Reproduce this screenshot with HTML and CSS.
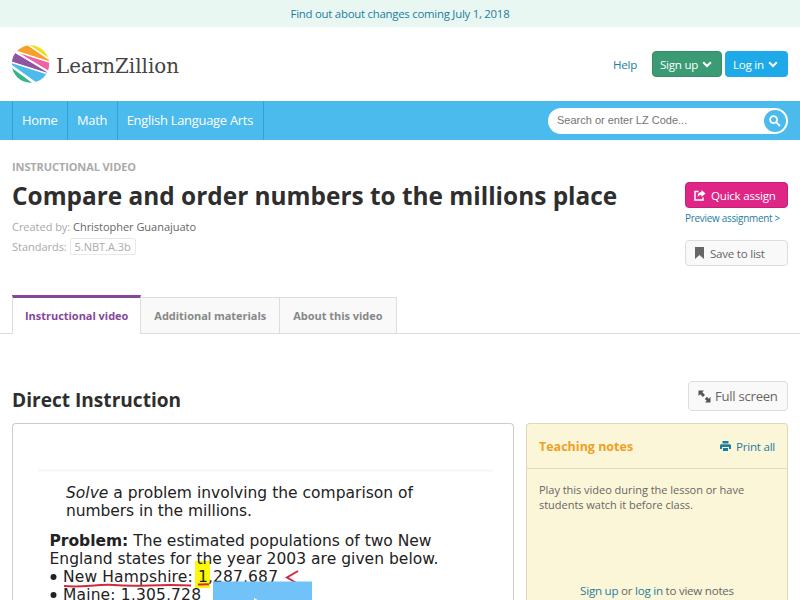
FILE: index.html
```
<!DOCTYPE html>
<html lang="en">

<head>
  <meta charset="utf-8">
  <meta name="viewport" content="width=device-width">
  <title>Compare and order numbers to the millions place | LearnZillion</title>

  <link rel="stylesheet" href="styles.css">
</head>

<body>
  <div class="banner">
    <a class="link" href="#">Find out about changes coming July 1, 2018</a>
  </div>

  <header class="header">
    <a class="logo" href="#">
      <svg width="170" height="40" viewBox="0 0 170 40">
        <clipPath id="ball"><circle cx="18.500" cy="19" r="18.700"/></clipPath>
        <g clip-path="url(#ball)">
          <path d="M16 0H38V15Z" fill="#f1dc22"/>
          <path d="M0 0H16L38 15V17L4 6Z" fill="#f6a02c"/>
          <path d="M4 6L38 17V27Z" fill="#ec64a4"/>
          <path d="M0 8L4 8L38 29L0 17Z" fill="#9254a2"/>
          <path d="M0 17L38 29L28 40L0 20Z" fill="#4cbbec"/>
          <path d="M0 22L23 40H0Z" fill="#35b58a"/>
          <path d="M15 -1L39 15.500M3 6L39 17.500M3 7L39 28M0 17.500L38 29.500M0 22L23 39" fill="none" stroke="#fff" stroke-width="1.500"/>
        </g>
        <text class="logo__text" x="44" y="28" textLength="123" lengthAdjust="spacingAndGlyphs">LearnZillion</text>
      </svg>
    </a>
    <div class="account">
      <a class="link account__help" href="#">Help</a>
      <button class="button button--green">Sign up
        <svg class="chevron" width="10" height="7" viewBox="0 0 10 7"><path d="M1.200 1.200L5 5L8.800 1.200"/></svg>
      </button>
      <button class="button button--blue">Log in
        <svg class="chevron" width="10" height="7" viewBox="0 0 10 7"><path d="M1.200 1.200L5 5L8.800 1.200"/></svg>
      </button>
    </div>
  </header>

  <nav class="nav">
    <div class="nav__links">
      <a class="nav__link" href="#">Home</a>
      <a class="nav__link" href="#">Math</a>
      <a class="nav__link" href="#">English Language Arts</a>
    </div>
    <form class="search">
      <input class="search__field" type="text" placeholder="Search or enter LZ Code...">
      <button class="search__button" type="button" aria-label="Search">
        <svg width="12" height="12" viewBox="0 0 12 12"><circle cx="4.600" cy="4.600" r="3.500"/><path d="M7.400 7.400L11 11"/></svg>
      </button>
    </form>
  </nav>

  <section class="intro">
    <div class="intro__main">
      <div class="intro__type">Instructional video</div>
      <h1 class="intro__title">Compare and order numbers to the millions place</h1>
      <div class="intro__meta">Created by: <span class="intro__author">Christopher Guanajuato</span></div>
      <div class="intro__meta">Standards: <span class="standard">5.NBT.A.3b</span></div>
    </div>
    <div class="actions">
      <button class="button button--pink">
        <svg class="button__icon" width="12" height="11" viewBox="0 0 12 11">
          <path d="M4.500 1.500H1V10H9V7.500" fill="none" stroke="#fff" stroke-width="1.500"/>
          <path d="M7.500 0L11.500 3.500L7.500 7V4.900C5.500 4.800 4.400 5.500 3.700 7C3.300 4 4.700 2.200 7.500 2.100Z" fill="#fff"/>
        </svg>
        Quick assign
      </button>
      <a class="link actions__preview" href="#">Preview assignment &gt;</a>
      <button class="button button--plain">
        <svg class="button__icon" width="9" height="12" viewBox="0 0 9 12"><path d="M0 0H9V12L4.500 8L0 12Z" fill="#666"/></svg>
        Save to list
      </button>
    </div>
  </section>

  <div class="tabs">
    <a class="tab tab--active" href="#">Instructional video</a>
    <a class="tab" href="#">Additional materials</a>
    <a class="tab" href="#">About this video</a>
  </div>

  <div class="section-head">
    <h2 class="section-head__title">Direct Instruction</h2>
    <button class="button button--plain button--large">
      <svg class="button__icon" width="13" height="13" viewBox="0 0 13 13" fill="#555">
        <path d="M0.500 0.500H6L4.300 2.200L7 4.900L4.900 7L2.200 4.300L0.500 6Z"/>
        <path d="M12.500 12.500H7L8.700 10.800L6.800 8.900L8.900 6.800L10.800 8.700L12.500 7Z"/>
      </svg>
      Full screen
    </button>
  </div>

  <main class="content">
    <div class="video">
      <svg class="slide" width="500" height="176" viewBox="0 0 500 176">
        <path d="M25 46.500H480" stroke="#f6f6f6" stroke-width="2"/>
        <rect x="182" y="137" width="15" height="27" fill="#fcf80c"/>
        <text x="53" y="74" textLength="347"><tspan font-style="italic">Solve</tspan> a problem involving the comparison of</text>
        <text x="53" y="92" textLength="186">numbers in the millions.</text>
        <text x="36.500" y="121.500" textLength="382"><tspan font-weight="bold">Problem:</tspan> The estimated populations of two New</text>
        <text x="36.500" y="140" textLength="389">England states for the year 2003 are given below.</text>
        <circle cx="40.500" cy="153" r="3"/>
        <text x="50" y="158" textLength="215">New Hampshire: 1,287,687</text>
        <circle cx="40.500" cy="171" r="3"/>
        <text x="50" y="176" textLength="138">Maine: 1,305,728</text>
        <path class="pen" d="M51 162C70 164 82 160 101 161C125 163 143 160 178 161.500M185 160.500C189 161 191 159.500 196 160.500"/>
        <path class="pen" d="M285 147L274 153.500L286 160.500"/>
        <rect x="200" y="157.500" width="99" height="63" fill="#72c2fa"/>
        <path d="M241 174L300 207L241 220Z" fill="#fff"/>
      </svg>
    </div>

    <aside class="notes">
      <div class="notes__head">
        <h3 class="notes__title">Teaching notes</h3>
        <a class="link notes__print" href="#">
          <svg class="button__icon" width="11" height="10" viewBox="0 0 11 10" fill="#1c7da0">
            <path d="M2.500 0H8.500V2.500H2.500ZM1 3.200H10L11 4V8H9V6H2V8H0V4ZM3 7H8V10H3Z"/>
          </svg>
          Print all
        </a>
      </div>
      <p class="notes__text">Play this video during the lesson or have students watch it before class.</p>
      <p class="notes__login"><a class="link" href="#">Sign up</a> or <a class="link" href="#">log in</a> to view notes</p>
    </aside>
  </main>
</body>

</html>
```

FILE: styles.css
```
:root {
  --color-link: #1c7da0;
  --color-blue: #4bbaec;
  --color-text: #666;
  --color-border: #ddd;
}

* {
  box-sizing: border-box;
}

body {
  margin: 0;
  height: 600px;
  overflow: hidden;
  background-color: #fff;
  font: 11.6px/15px "Open Sans", "Noto Sans", sans-serif;
  letter-spacing: -0.25px;
  color: var(--color-text);
}

h1,
h2,
h3,
p {
  margin: 0;
}

a {
  text-decoration: none;
}

.link {
  color: var(--color-link);
}

.banner {
  height: 27px;
  background-color: #e8f7f2;
  line-height: 28px;
  font-size: 11.400px;
  text-align: center;
}

.header {
  display: flex;
  justify-content: space-between;
  height: 74px;
  padding: 18px 12px 0;
}

.logo__text {
  font-family: "DejaVu Serif", serif;
  font-size: 21px;
  letter-spacing: 0;
  fill: #444;
}

.account {
  display: flex;
  align-items: center;
  gap: 3px;
  height: 26px;
  margin-top: 6px;
}

.account__help {
  margin-right: 12px;
}

.button {
  display: flex;
  align-items: center;
  height: 26px;
  padding: 0 7px;
  border: 1px solid transparent;
  border-radius: 4px;
  font: inherit;
  letter-spacing: inherit;
  white-space: nowrap;
  color: #fff;
}

.button__icon {
  flex-shrink: 0;
}

.button--green {
  width: 70px;
  padding-right: 9px;
  justify-content: space-between;
  background-color: #3b9b74;
  border-color: #348b68;
}

.button--blue {
  width: 63px;
  padding-right: 9px;
  justify-content: space-between;
  background-color: #1eaae8;
}

.button--pink {
  gap: 5px;
  padding: 0 8px;
  background-color: #df2585;
  border-color: #c81f76;
}

.button--plain {
  gap: 6px;
  padding: 0 9px;
  background-color: #f9f9f9;
  border-color: var(--color-border);
  color: #666;
}

.button--large {
  width: 100px;
  height: 30px;
  gap: 4px;
  font-size: 13.100px;
}

.chevron {
  flex-shrink: 0;
  fill: none;
  stroke: #fff;
  stroke-width: 2;
}

.nav {
  display: flex;
  justify-content: space-between;
  align-items: center;
  height: 39px;
  padding: 0 12px;
  background-color: var(--color-blue);
}

.nav__links {
  display: flex;
  border-left: 1px solid #2ca3da;
}

.nav__link {
  padding: 0 9.500px 0 9px;
  border-right: 1px solid #2ca3da;
  font-size: 12.900px;
  line-height: 39px;
  color: #fff;
}

.search {
  display: flex;
  align-items: center;
  width: 240px;
  height: 26px;
  padding: 0 2px 0 9px;
  border-radius: 13px;
  background-color: #fff;
}

.search__field {
  flex: 1;
  min-width: 0;
  padding: 0 0 1px;
  border: none;
  background: none;
  font: 11px "Liberation Sans", Arial, sans-serif;
}

.search__field::placeholder {
  color: #757575;
}

.search__button {
  display: flex;
  align-items: center;
  justify-content: center;
  width: 22px;
  height: 22px;
  padding: 0;
  border: none;
  border-radius: 50%;
  background-color: var(--color-blue);
  fill: none;
  stroke: #fff;
  stroke-width: 1.800;
}

.intro {
  display: flex;
  justify-content: space-between;
  height: 155px;
  padding: 19px 12px 0;
}

.intro__type {
  font-size: 11px;
  font-weight: 700;
  letter-spacing: -0.100px;
  text-transform: uppercase;
  color: #aaa;
}

.intro__title {
  margin: 6px 0 7px;
  font-size: 24.400px;
  font-weight: 700;
  letter-spacing: 0;
  line-height: 32px;
  color: #2e2e2e;
}

.intro__meta {
  margin-bottom: 5px;
  font-size: 11px;
  letter-spacing: -0.030px;
  color: #aaa;
}

.intro__author {
  color: #666;
}

.standard {
  padding: 0 4px;
  border: 1px solid #e8e8e8;
  border-radius: 2px;
}

.actions {
  display: flex;
  flex-direction: column;
  width: 103px;
  padding-top: 23px;
}

.actions__preview {
  margin: 3px 0 14px;
  font-size: 9.900px;
  white-space: nowrap;
}

.tabs {
  display: flex;
  align-items: flex-end;
  height: 39px;
  padding: 0 12px;
  box-shadow: inset 0 -1px var(--color-border);
}

.tab {
  height: 37px;
  padding: 0 13px;
  border: 1px solid var(--color-border);
  border-left: none;
  background-color: #f9f9f9;
  font-size: 11px;
  font-weight: 700;
  letter-spacing: -0.030px;
  line-height: 36px;
  color: #888;
}

.tab--active {
  height: 39px;
  padding: 0 12px;
  border-left: 1px solid var(--color-border);
  border-top: 3px solid #85479a;
  border-bottom: none;
  background-color: #fff;
  color: #85479a;
}

.section-head {
  display: flex;
  justify-content: space-between;
  align-items: flex-end;
  padding: 47px 12px 12px;
}

.section-head__title {
  font-size: 19.100px;
  letter-spacing: 0;
  line-height: 22px;
  color: #2e2e2e;
}

.content {
  display: flex;
  gap: 12px;
  padding: 0 12px;
}

.video,
.notes {
  height: 177px;
  border: 1px solid #ccc;
  border-bottom: none;
  border-radius: 4px 4px 0 0;
}

.video {
  width: 502px;
}

.slide {
  display: block;
  overflow: visible;
  font-family: "DejaVu Sans", Verdana, sans-serif;
  font-size: 15.500px;
  letter-spacing: 0;
  fill: #222;
}

.pen {
  fill: none;
  stroke: #cf2b3b;
  stroke-width: 2;
}

.notes {
  flex: 1;
  border-color: #ddd9b8;
  background-color: #fcf6d9;
}

.notes__head {
  display: flex;
  justify-content: space-between;
  align-items: center;
  height: 45px;
  padding: 0 12px;
  border-bottom: 1px solid #e2dcb8;
}

.notes__title {
  font-size: 12.500px;
  letter-spacing: 0;
  color: #f0a024;
}

.notes__print {
  display: flex;
  align-items: center;
  gap: 5px;
}

.notes__text {
  height: 101px;
  padding: 13px 12px 0;
  font-size: 11px;
  letter-spacing: -0.030px;
}

.notes__login {
  padding-top: 13px;
  text-align: center;
}
```
